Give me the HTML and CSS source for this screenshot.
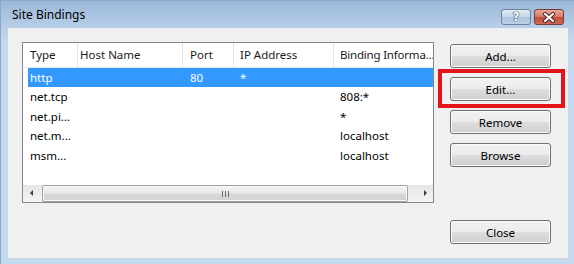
FILE: index.html
```html
<!DOCTYPE html>
<html lang="en">
<head>
  <meta charset="UTF-8" />
  <title>Site Bindings</title>
  <link rel="stylesheet" href="styles.css">
</head>
<body>

  <div class="window">
    <div class="title-bar">
      <span class="title">Site Bindings</span>
      <div class="caption-buttons">
        <span class="cap-btn help-btn">?</span>
        <span class="cap-btn close-x">
          <svg width="14" height="11" viewBox="0 0 14 11">
            <path d="M3 2 L11 9 M11 2 L3 9" stroke="#4a2020" stroke-width="4" stroke-linecap="round" />
            <path d="M3 2 L11 9 M11 2 L3 9" stroke="#ffffff" stroke-width="2.2" stroke-linecap="round" />
          </svg>
        </span>
      </div>
    </div>

    <div class="client">
      <div class="main-row">
        <div class="list-box">
          <div class="list-head">
            <div class="col col-type">Type</div>
            <div class="col col-host">Host Name</div>
            <div class="col col-port">Port</div>
            <div class="col col-ip">IP Address</div>
            <div class="col col-bind">Binding Informa...</div>
          </div>

          <div class="list-body">
            <div class="row selected">
              <div class="cell">http</div>
              <div class="cell"></div>
              <div class="cell">80</div>
              <div class="cell">*</div>
              <div class="cell"></div>
            </div>
            <div class="row">
              <div class="cell">net.tcp</div>
              <div class="cell"></div>
              <div class="cell"></div>
              <div class="cell"></div>
              <div class="cell">808:*</div>
            </div>
            <div class="row">
              <div class="cell">net.pi...</div>
              <div class="cell"></div>
              <div class="cell"></div>
              <div class="cell"></div>
              <div class="cell">*</div>
            </div>
            <div class="row">
              <div class="cell">net.m...</div>
              <div class="cell"></div>
              <div class="cell"></div>
              <div class="cell"></div>
              <div class="cell">localhost</div>
            </div>
            <div class="row">
              <div class="cell">msm...</div>
              <div class="cell"></div>
              <div class="cell"></div>
              <div class="cell"></div>
              <div class="cell">localhost</div>
            </div>
          </div>

          <div class="h-scroll">
            <div class="arrow arrow-left"></div>
            <div class="track">
              <div class="thumb"><span class="grip"></span></div>
            </div>
            <div class="arrow arrow-right"></div>
          </div>
        </div>

        <div class="side-buttons">
          <button type="button" class="win-btn">Add...</button>
          <button type="button" class="win-btn edit-btn">Edit...</button>
          <button type="button" class="win-btn">Remove</button>
          <button type="button" class="win-btn">Browse</button>
        </div>
      </div>

      <div class="footer">
        <button type="button" class="win-btn">Close</button>
      </div>
    </div>
  </div>

</body>
</html>
```

FILE: styles.css
```css
* {
  box-sizing: border-box;
}
body {
  margin: 0;
  font-family: "Noto Sans", sans-serif;
  font-size: 11.5px;
  background-color: #c4d8ee;
}
.window {
  width: 574px;
  height: 264px;
  display: flex;
  flex-direction: column;
  padding: 0 6px 6px 7px;
  background: linear-gradient(#9ab8d8 0px, #b9d0e9 28px, #c4d8ee 40px);
  border-top: 1px solid #8aa8c8;
  border-left: 1px solid #8aa8c8;
}
.title-bar {
  height: 27px;
  display: flex;
  justify-content: space-between;
  align-items: flex-start;
}
.title {
  padding-left: 4px;
  padding-top: 7px;
  line-height: 14px;
  font-size: 12px;
  color: #000;
}
.caption-buttons {
  display: flex;
  gap: 3px;
  margin-top: 8px;
  margin-right: 4px;
}
.cap-btn {
  width: 30px;
  height: 16px;
  border-radius: 3px;
  display: flex;
  justify-content: center;
  align-items: center;
}
.help-btn {
  border: 1px solid #6e819b;
  background: linear-gradient(#e3ecf6, #c3d4e8 50%, #aec3dd 51%, #bcd0e7);
  color: #fff;
  font-family: "DejaVu Sans", sans-serif;
  font-weight: bold;
  font-size: 12px;
  line-height: 12px;
  text-shadow: 0 0 1px #2d3e55, 0 0 1px #2d3e55, 0 0 1px #2d3e55;
}
.close-x {
  border: 1px solid #7a3a34;
  background: linear-gradient(#e9a99b, #d2776a 50%, #c24a3b 51%, #cf6a55);
}
.client {
  flex: 1;
  background-color: #f0f0f0;
  padding: 14px 17px 14px 14px;
  display: flex;
  flex-direction: column;
}
.main-row {
  display: flex;
  gap: 16px;
}
.list-box {
  width: 413px;
  height: 161px;
  border: 1px solid #828790;
  background-color: white;
  display: flex;
  flex-direction: column;
  overflow: hidden;
}
.list-head {
  display: grid;
  grid-template-columns: 55px 105px 51px 100px 110px;
  height: 25px;
  border-bottom: 1px solid #e3e6ea;
  color: #1a1a1a;
}
.col {
  line-height: 24px;
  padding-left: 6px;
  border-right: 1px solid #e5e5e5;
  white-space: nowrap;
  overflow: hidden;
}
.col-type {
  padding-left: 7px;
}
.col-host {
  padding-left: 2px;
}
.col-port {
  padding-left: 7px;
}
.col-bind {
  letter-spacing: -0.2px;
}
.list-body {
  flex: 1;
}
.row {
  display: grid;
  grid-template-columns: 50px 105px 51px 100px 110px;
  height: 19.4px;
  margin-left: 5px;
  line-height: 19px;
  color: #000;
}
.row.selected {
  background-color: #3399ff;
  color: white;
}
.cell {
  padding-left: 6px;
  white-space: nowrap;
}
.cell:first-child {
  padding-left: 2px;
}
.row .cell:nth-child(3) {
  padding-left: 7px;
}
.h-scroll {
  height: 17px;
  display: flex;
  background: linear-gradient(#e6e6e6, #f4f4f4);
}
.arrow {
  width: 17px;
  position: relative;
}
.arrow::after {
  content: "";
  position: absolute;
  top: 5px;
  width: 0;
  height: 0;
  border-top: 3.5px solid transparent;
  border-bottom: 3.5px solid transparent;
}
.arrow-left::after {
  left: 7px;
  border-right: 3.5px solid #3a3a3a;
}
.arrow-right::after {
  left: 8px;
  border-left: 3.5px solid #3a3a3a;
}
.track {
  flex: 1;
  padding: 0 8px 0 2px;
  display: flex;
}
.thumb {
  flex: 1;
  border: 1px solid #a0a0a0;
  border-radius: 2px;
  background: linear-gradient(#f4f4f4, #e9e9e9 45%, #d8d8d8 55%, #d2d2d2);
  box-shadow: inset 0 0 0 1px #fafafa;
  display: flex;
  justify-content: center;
  align-items: center;
}
.grip {
  width: 7px;
  height: 6px;
  background: linear-gradient(90deg, #6b6b6b 1px, transparent 1px, transparent 3px, #6b6b6b 3px, #6b6b6b 4px, transparent 4px, transparent 6px, #6b6b6b 6px);
}
.side-buttons {
  display: flex;
  flex-direction: column;
  gap: 9px;
  padding-top: 2px;
}
.win-btn {
  width: 101px;
  height: 24px;
  padding: 0;
  border: 1px solid #707070;
  border-radius: 3px;
  background: linear-gradient(#f2f2f2 0%, #ebebeb 48%, #dddddd 52%, #cfcfcf 100%);
  box-shadow: inset 0 0 0 1px #fbfbfb;
  font-family: "Noto Sans", sans-serif;
  font-size: 11.5px;
  color: #000;
  cursor: pointer;
}
.edit-btn {
  position: relative;
}
.edit-btn::after {
  content: "";
  position: absolute;
  left: -13px;
  top: -9px;
  right: -15px;
  bottom: -8px;
  border: 4px solid #e3141c;
}
.footer {
  display: flex;
  justify-content: flex-end;
  margin-top: auto;
}
```
